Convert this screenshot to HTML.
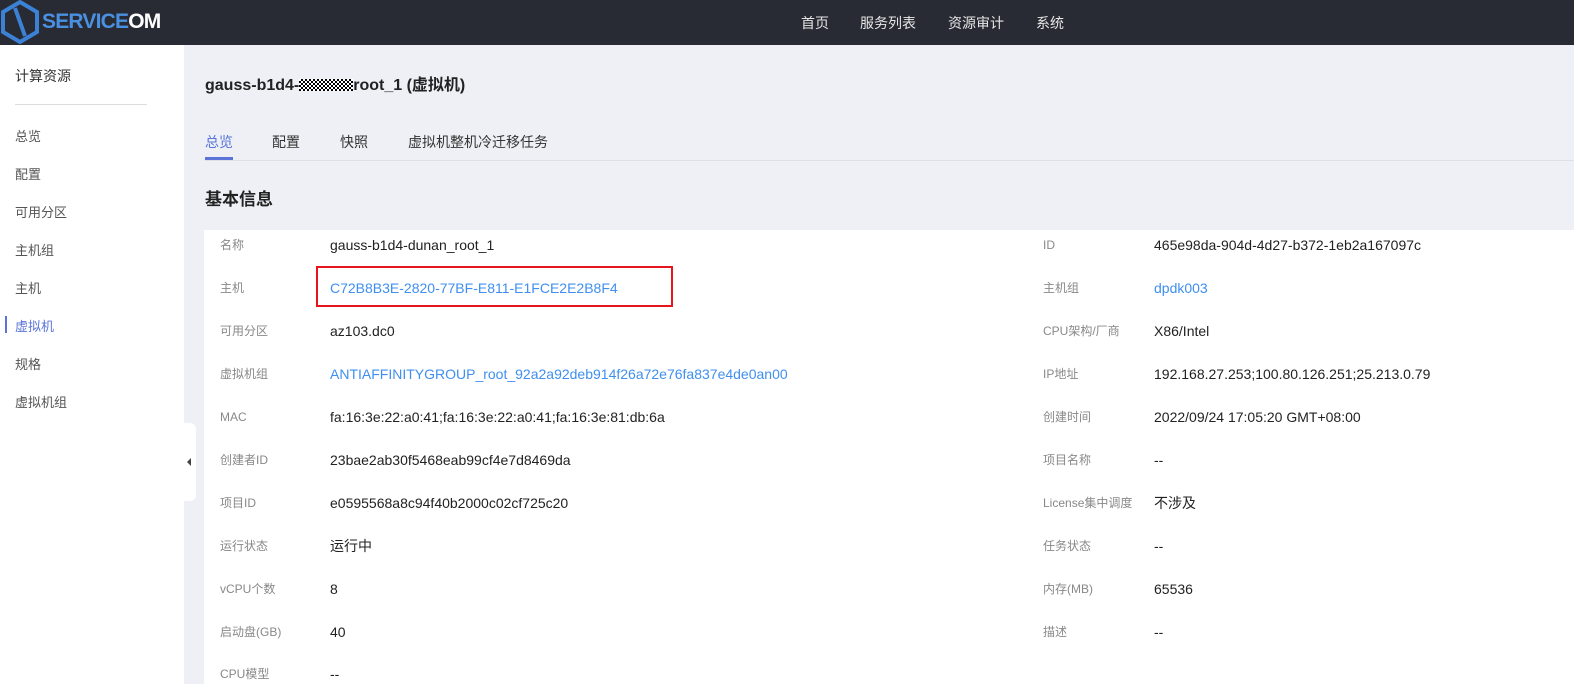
<!DOCTYPE html>
<html><head><meta charset="utf-8"><style>
*{margin:0;padding:0;box-sizing:border-box}
body{width:1574px;height:684px;overflow:hidden;background:#eef0f5;font-family:"Liberation Sans","Noto Sans CJK SC",sans-serif;position:relative}
.hd{position:absolute;left:0;top:0;width:1574px;height:45px;background:#282b33}
.logo{position:absolute;left:42px;top:10px;font-size:21px;font-weight:bold;color:#4a90e2;letter-spacing:-0.8px}
.logo span{color:#fff}
.nav{position:absolute;top:13px;font-size:14px;color:#e6e6e6}
.sb{position:absolute;left:0;top:45px;width:184px;height:639px;background:#fff}
.sb .t{position:absolute;left:15px;top:21px;font-size:14px;color:#333}
.sb .ln{position:absolute;left:15px;top:59px;width:132px;height:1px;background:#ddd}
.sb .i{position:absolute;left:15px;font-size:13px;color:#555}
.sb .act{color:#5a74d8}
.bar{position:absolute;left:5px;top:271px;width:2px;height:17px;background:#5a74d8}
.tog{position:absolute;left:184px;top:423px;width:12px;height:78px;background:#fff;border-radius:0 6px 6px 0}
.tog:after{content:"";position:absolute;left:3px;top:35px;border:4px solid transparent;border-right:4px solid #444;border-left:0}
.title{position:absolute;left:205px;top:71px;font-size:16px;font-weight:bold;color:#222}
.chk{display:inline-block;width:54px;height:12px;vertical-align:-1px;background:repeating-conic-gradient(#000 0 25%,#fff 0 50%) 0 0/4px 4px}
.tab{position:absolute;top:132px;font-size:14px;color:#333}
.tl{position:absolute;left:205px;top:160px;width:1369px;height:1px;background:#dcdfe6}
.ul{position:absolute;left:205px;top:157px;width:28px;height:3px;background:#5a74d8}
.h2{position:absolute;left:205px;top:185px;font-size:17px;font-weight:bold;color:#222}
.pn{position:absolute;left:204px;top:230px;width:1370px;height:454px;background:#fff}
.l{position:absolute;font-size:12px;color:#888;line-height:1}
.v{position:absolute;font-size:14px;color:#222;line-height:1}
.lk{color:#3f8ff0}
.red{position:absolute;left:316px;top:266px;width:357px;height:41px;border:2px solid #e8141c}
</style></head><body>
<div class="hd">
<svg style="position:absolute;left:0px;top:0px" width="40" height="44" viewBox="0 0 40 44"><path d="M20 2 L37 12 L37 32 L20 42 L3 32 L3 12 Z" fill="none" stroke="#3b82d6" stroke-width="4"/><path d="M15 8 L25 36" stroke="#3b82d6" stroke-width="4"/></svg>
<div class="logo">SERVICE<span>OM</span></div>
<div class="nav" style="left:801px">首页</div>
<div class="nav" style="left:860px">服务列表</div>
<div class="nav" style="left:948px">资源审计</div>
<div class="nav" style="left:1036px">系统</div>
</div>
<div class="sb">
<div class="t">计算资源</div><div class="ln"></div>
<div class="i" style="top:81px">总览</div>
<div class="i" style="top:119px">配置</div>
<div class="i" style="top:157px">可用分区</div>
<div class="i" style="top:195px">主机组</div>
<div class="i" style="top:233px">主机</div>
<div class="bar"></div>
<div class="i act" style="top:271px">虚拟机</div>
<div class="i" style="top:309px">规格</div>
<div class="i" style="top:347px">虚拟机组</div>
</div>
<div class="tog"></div>
<div class="title">gauss-b1d4-<span class="chk"></span>root_1 (虚拟机)</div>
<div class="tab" style="left:205px;color:#5a74d8">总览</div>
<div class="tab" style="left:272px">配置</div>
<div class="tab" style="left:340px">快照</div>
<div class="tab" style="left:408px">虚拟机整机冷迁移任务</div>
<div class="tl"></div><div class="ul"></div>
<div class="h2">基本信息</div>
<div class="pn"></div>
<div class="l" style="left:220px;top:239px">名称</div><div class="v" style="left:330px;top:238px">gauss-b1d4-dunan_root_1</div>
<div class="l" style="left:1043px;top:239px">ID</div><div class="v" style="left:1154px;top:238px">465e98da-904d-4d27-b372-1eb2a167097c</div>
<div class="l" style="left:220px;top:282px">主机</div><div class="v lk" style="left:330px;top:281px">C72B8B3E-2820-77BF-E811-E1FCE2E2B8F4</div>
<div class="l" style="left:1043px;top:282px">主机组</div><div class="v lk" style="left:1154px;top:281px">dpdk003</div>
<div class="l" style="left:220px;top:325px">可用分区</div><div class="v" style="left:330px;top:324px">az103.dc0</div>
<div class="l" style="left:1043px;top:325px">CPU架构/厂商</div><div class="v" style="left:1154px;top:324px">X86/Intel</div>
<div class="l" style="left:220px;top:368px">虚拟机组</div><div class="v lk" style="left:330px;top:367px">ANTIAFFINITYGROUP_root_92a2a92deb914f26a72e76fa837e4de0an00</div>
<div class="l" style="left:1043px;top:368px">IP地址</div><div class="v" style="left:1154px;top:367px">192.168.27.253;100.80.126.251;25.213.0.79</div>
<div class="l" style="left:220px;top:411px">MAC</div><div class="v" style="left:330px;top:410px">fa:16:3e:22:a0:41;fa:16:3e:22:a0:41;fa:16:3e:81:db:6a</div>
<div class="l" style="left:1043px;top:411px">创建时间</div><div class="v" style="left:1154px;top:410px">2022/09/24 17:05:20 GMT+08:00</div>
<div class="l" style="left:220px;top:454px">创建者ID</div><div class="v" style="left:330px;top:453px">23bae2ab30f5468eab99cf4e7d8469da</div>
<div class="l" style="left:1043px;top:454px">项目名称</div><div class="v" style="left:1154px;top:453px">--</div>
<div class="l" style="left:220px;top:497px">项目ID</div><div class="v" style="left:330px;top:496px">e0595568a8c94f40b2000c02cf725c20</div>
<div class="l" style="left:1043px;top:497px">License集中调度</div><div class="v" style="left:1154px;top:496px">不涉及</div>
<div class="l" style="left:220px;top:540px">运行状态</div><div class="v" style="left:330px;top:539px">运行中</div>
<div class="l" style="left:1043px;top:540px">任务状态</div><div class="v" style="left:1154px;top:539px">--</div>
<div class="l" style="left:220px;top:583px">vCPU个数</div><div class="v" style="left:330px;top:582px">8</div>
<div class="l" style="left:1043px;top:583px">内存(MB)</div><div class="v" style="left:1154px;top:582px">65536</div>
<div class="l" style="left:220px;top:626px">启动盘(GB)</div><div class="v" style="left:330px;top:625px">40</div>
<div class="l" style="left:1043px;top:626px">描述</div><div class="v" style="left:1154px;top:625px">--</div>
<div class="l" style="left:220px;top:668px">CPU模型</div><div class="v" style="left:330px;top:667px">--</div>
<div class="red"></div>
</body></html>
